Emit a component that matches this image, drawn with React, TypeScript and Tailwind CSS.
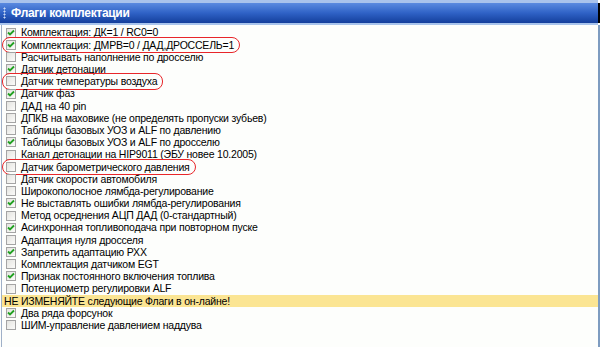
import React from 'react';

type Flag = { label: string; checked: boolean; marked?: boolean };

const flags: Flag[] = [
    { label: 'Комплектация: ДК=1 / RC0=0', checked: true },
    { label: 'Комплектация: ДМРВ=0 / ДАД,ДРОССЕЛЬ=1', checked: true, marked: true },
    { label: 'Расчитывать наполнение по дросселю', checked: false },
    { label: 'Датчик детонации', checked: true },
    { label: 'Датчик температуры воздуха', checked: false, marked: true },
    { label: 'Датчик фаз', checked: true },
    { label: 'ДАД на 40 pin', checked: false },
    { label: 'ДПКВ на маховике (не определять пропуски зубьев)', checked: false },
    { label: 'Таблицы базовых УОЗ и ALF по давлению', checked: false },
    { label: 'Таблицы базовых УОЗ и ALF по дросселю', checked: true },
    { label: 'Канал детонации на HIP9011 (ЭБУ новее 10.2005)', checked: false },
    { label: 'Датчик барометрического давления', checked: false, marked: true },
    { label: 'Датчик скорости автомобиля', checked: false },
    { label: 'Широкополосное лямбда-регулирование', checked: false },
    { label: 'Не выставлять ошибки лямбда-регулирования', checked: true },
    { label: 'Метод осреднения АЦП ДАД (0-стандартный)', checked: false },
    { label: 'Асинхронная топливоподача при повторном пуске', checked: true },
    { label: 'Адаптация нуля дросселя', checked: false },
    { label: 'Запретить адаптацию РХХ', checked: true },
    { label: 'Комплектация датчиком EGT', checked: false },
    { label: 'Признак постоянного включения топлива', checked: true },
    { label: 'Потенциометр регулировки ALF', checked: false },
];

const onlineFlags: Flag[] = [
    { label: 'Два ряда форсунок', checked: true },
    { label: 'ШИМ-управление давлением наддува', checked: false },
];

const CheckBox = ({ checked }: { checked: boolean }) => (
    <span className="w-[10px] h-[10px] shrink-0 border border-[#a4a4a4] bg-gradient-to-br from-[#e4e4e0] to-[#fbfbf9] flex items-center justify-center">
        {checked && (
            <svg width="8" height="8" viewBox="0 0 8 8">
                <path d="M1 3.5 L3 5.5 L7 1.5" fill="none" stroke="#21a121" strokeWidth="1.8" />
            </svg>
        )}
    </span>
);

const FlagRow = ({ flag }: { flag: Flag }) => (
    <div className="h-[12.2px] flex items-center">
        <div className="relative flex items-center gap-[5px] pl-[4px] pr-[3px]">
            <CheckBox checked={flag.checked} />
            <span className="whitespace-nowrap leading-none">{flag.label}</span>
            {flag.marked && (
                <span className="absolute left-0 right-[-3px] top-[-3px] bottom-[-3px] border border-[#e8262a] rounded-[8px]" />
            )}
        </div>
    </div>
);

const App: React.FC = () => {
    return (
        <div className="w-[600px] h-[347px] overflow-hidden bg-[#fdfefc] flex flex-col font-['Liberation_Sans',Arial,sans-serif] text-[10.5px] tracking-[-0.2px] text-black">
            <div className="h-[3px] bg-[#a9c3ec] mr-[2px]" />
            <div className="h-[20px] flex items-center bg-gradient-to-b from-[#5a8ae0] via-[#2f62c6] to-[#143f9c] border-r-2 border-black">
                <div className="w-[3px] ml-[3px] h-[12px] bg-[radial-gradient(circle,#c8d8f4_45%,transparent_50%)] bg-[length:3px_3px]" />
                <span className="ml-[5px] text-white font-bold text-[12px] tracking-[-0.3px]">Флаги комплектации</span>
            </div>
            <div className="h-[2px] bg-[#a8c4ec] mr-[2px]" />
            <div className="flex-1 border-l border-[#9fb0c8] border-r-2 border-r-[#7e9cc0] ml-[1px] pt-[1.6px]">
                {flags.map(f => <FlagRow key={f.label} flag={f} />)}
                <div className="h-[12.2px] flex items-center bg-[#fbe593] pl-[2px]">
                    <span className="whitespace-nowrap leading-none">НЕ ИЗМЕНЯЙТЕ следующие Флаги в он-лайне!</span>
                </div>
                {onlineFlags.map(f => <FlagRow key={f.label} flag={f} />)}
            </div>
        </div>
    );
};

export default App;
